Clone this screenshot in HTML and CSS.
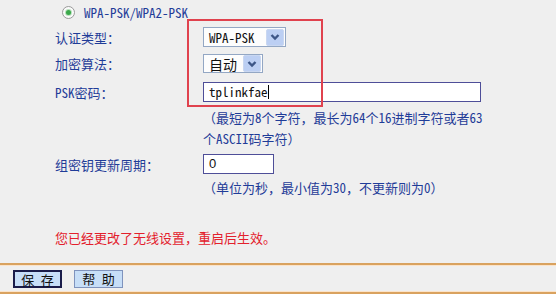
FILE: index.html
```html
<!DOCTYPE html>
<html lang="zh-CN">
<head>
    <meta charset="UTF-8">
    <title>无线安全设置</title>
    <link rel="stylesheet" href="styles.css">
</head>
<body>
    <div class="form">
        <!-- Security mode -->
        <div class="row row-radio">
            <span class="radio"><span class="radio-dot"></span></span>
            <span>WPA-PSK/WPA2-PSK</span>
        </div>

        <!-- Highlighted fields -->
        <div class="highlight"></div>

        <div class="row row-auth">
            <div class="label">认证类型：</div>
            <div class="select select-wide">
                <span class="select-value">WPA-PSK</span>
                <span class="select-arrow">
                    <svg width="14" height="14" viewBox="0 0 14 14"><path d="M3.5 5 L7 8.5 L10.5 5" fill="none" stroke="#3d5687" stroke-width="2.4"/></svg>
                </span>
            </div>
        </div>

        <div class="row row-cipher">
            <div class="label">加密算法：</div>
            <div class="select select-small">
                <span class="select-value select-cn">自动</span>
                <span class="select-arrow">
                    <svg width="14" height="14" viewBox="0 0 14 14"><path d="M3.5 5 L7 8.5 L10.5 5" fill="none" stroke="#3d5687" stroke-width="2.4"/></svg>
                </span>
            </div>
        </div>

        <div class="row row-psk">
            <div class="label">PSK密码：</div>
            <div class="input input-long">tplinkfae<span class="caret"></span></div>
        </div>

        <div class="hint hint-psk">（最短为8个字符，最长为64个16进制字符或者63<br>个ASCII码字符）</div>

        <div class="row row-group">
            <div class="label">组密钥更新周期：</div>
            <div class="input input-short">0</div>
        </div>

        <div class="hint hint-group">（单位为秒，最小值为30，不更新则为0）</div>

        <div class="notice">您已经更改了无线设置，重启后生效。</div>
    </div>

    <!-- Buttons -->
    <div class="footer">
        <button class="btn btn-default">保 存</button>
        <button class="btn">帮 助</button>
    </div>
</body>
</html>
```

FILE: styles.css
```css
/* --- GENERAL --- */
body {
    margin: 0;
    background: #efefef;
    font-family: "Noto Sans Mono CJK SC", "Noto Sans CJK SC", monospace;
    font-size: 13px;
    font-weight: 500;
    color: #1f3c98;
    width: 556px;
    height: 294px;
    overflow: hidden;
}

.form {
    position: relative;
    padding-left: 55px;
}

.row {
    display: flex;
    align-items: center;
}

.label {
    width: 148px;
    flex-shrink: 0;
}

/* --- RADIO ROW --- */
.row-radio {
    height: 25px;
    padding-left: 7px;
    gap: 9px;
}

.radio {
    width: 11px;
    height: 11px;
    border: 1px solid #9a9a9a;
    border-radius: 50%;
    background: #fafafa;
    display: flex;
    align-items: center;
    justify-content: center;
}

.radio-dot {
    width: 5px;
    height: 5px;
    border-radius: 50%;
    background: #3aa84a;
    box-shadow: 0 0 0 1px #b9e0bd;
}

/* --- RED FRAME --- */
.highlight {
    position: absolute;
    left: 187px;
    top: 19px;
    width: 132px;
    height: 84px;
    border: 2px solid #e0424e;
    pointer-events: none;
}

/* --- SELECTS --- */
.row-auth { height: 24px; }
.row-cipher { height: 29px; }

.select {
    display: flex;
    align-items: center;
    justify-content: space-between;
    height: 18px;
    border: 1px solid #93a7c4;
    background: #fdfdfd;
    padding: 0 1px 0 5px;
    color: #111;
}

.select-wide { width: 75px; }
.select-small { width: 52px; height: 17px; }

.select-cn { font-size: 14px; }

.select-arrow {
    width: 16px;
    height: 15px;
    background: #bccff3;
    border: 1px solid #c9d7f1;
    border-radius: 2px;
    display: flex;
    align-items: center;
    justify-content: center;
}

/* --- TEXT INPUTS --- */
.row-psk { height: 28px; }
.row-group { height: 30px; }

.input {
    height: 18px;
    line-height: 18px;
    border: 1px solid #4e4e98;
    background: #fff;
    padding: 0 5px;
    color: #111;
}

.input-long { width: 266px; }
.input-short {
    width: 59px;
    font-family: "Liberation Sans", Arial, sans-serif;
    font-weight: normal;
}

.caret {
    display: inline-block;
    width: 1px;
    height: 14px;
    background: #000;
    vertical-align: -2px;
}

/* --- HINTS --- */
.hint {
    margin-left: 148px;
    line-height: 21px;
}

.hint-psk { padding-top: 1px; }
.hint-group { line-height: 18px; }

.notice {
    color: #e3202c;
    margin-top: 30px;
    line-height: 22px;
}

/* --- FOOTER --- */
.footer {
    margin-top: 14px;
    height: 27px;
    border-top: 2px solid #d9a25f;
    border-bottom: 2px solid #d9a25f;
    box-shadow: inset 0 1px 0 #fbe3c9, inset 0 -1px 0 #fbe3c9;
    display: flex;
    align-items: center;
    gap: 12px;
    padding-left: 13px;
}

.btn {
    font-family: inherit;
    font-size: 13px;
    font-weight: 500;
    color: #111;
    background: #c7def7;
    border: 1px solid #7f93bd;
    height: 18px;
    width: 49px;
    padding: 0;
    line-height: 16px;
}

.btn-default {
    border: 2px solid #1a1c4a;
}
```
